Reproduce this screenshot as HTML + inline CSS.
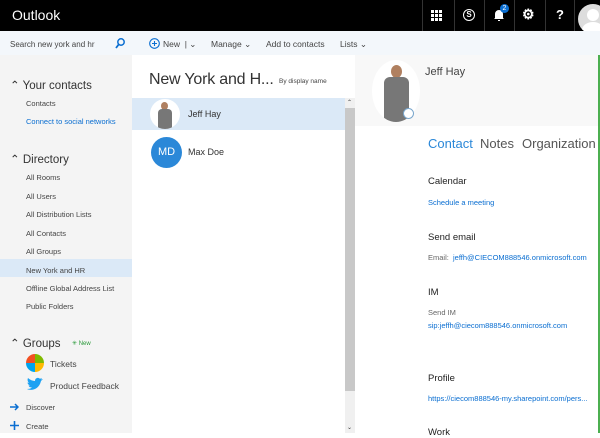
<!DOCTYPE html><html><head><style>
*{margin:0;padding:0;box-sizing:border-box}
body{width:600px;height:433px;overflow:hidden;font-family:"Liberation Sans",sans-serif;background:#fff;position:relative;color:#333}
.a{position:absolute;white-space:nowrap}
.top{left:0;top:0;width:600px;height:31px;background:#000}
.tb{left:0;top:31px;width:600px;height:24px;background:#f3f7fb}
.nav{left:0;top:55px;width:132px;height:378px;background:#f4f4f4}
.s{font-size:7.5px;color:#444}
.h{font-size:11.5px;color:#333}
.link{color:#0a6ed1}
.sep{top:0;width:1px;height:31px;background:#333}
</style></head><body>
<div class="a top"></div>
<div class="a" style="left:12px;top:7px;color:#fff;font-size:14px">Outlook</div>
<div class="a sep" style="left:422px"></div><div class="a sep" style="left:454px"></div><div class="a sep" style="left:484px"></div><div class="a sep" style="left:514px"></div><div class="a sep" style="left:545px"></div><div class="a sep" style="left:574px"></div>
<svg class="a" style="left:431px;top:10px" width="11" height="11"><g fill="#fff"><rect x="0" y="0" width="3" height="3"/><rect x="4" y="0" width="3" height="3"/><rect x="8" y="0" width="3" height="3"/><rect x="0" y="4" width="3" height="3"/><rect x="4" y="4" width="3" height="3"/><rect x="8" y="4" width="3" height="3"/><rect x="0" y="8" width="3" height="3"/><rect x="4" y="8" width="3" height="3"/><rect x="8" y="8" width="3" height="3"/></g></svg>
<div class="a" style="left:463px;top:9px;width:12px;height:12px;border:1.5px solid #fff;border-radius:50%;color:#fff;font-size:8px;font-weight:bold;text-align:center;line-height:10px">S</div>
<svg class="a" style="left:493px;top:8px" width="12" height="14"><path d="M2 10 V6 a4 4 0 0 1 8 0 V10 L11 11 H1 Z M5 12 h2 v1 h-2z" fill="#fff"/></svg>
<div class="a" style="left:500px;top:4px;width:9px;height:9px;border-radius:50%;background:#0a6ed1;color:#fff;font-size:7px;text-align:center;line-height:9px">2</div>
<div class="a" style="left:522px;top:6px;color:#fff;font-size:14px;font-weight:bold">⚙</div>
<div class="a" style="left:556px;top:7px;color:#fff;font-size:13px;font-weight:bold">?</div>
<div class="a" style="left:578px;top:4px;width:30px;height:30px;border-radius:50%;background:#ddd;overflow:hidden"><div style="position:absolute;left:9px;top:5px;width:12px;height:12px;border-radius:50%;background:#fff"></div><div style="position:absolute;left:4px;top:18px;width:22px;height:16px;border-radius:50%;background:#fff"></div></div>
<div class="a tb"></div>
<div class="a s" style="left:10px;top:40px;font-size:8px">Search new york and hr</div>
<svg class="a" style="left:115px;top:38px" width="10" height="11"><circle cx="6" cy="4" r="3.2" fill="none" stroke="#0a6ed1" stroke-width="1.5"/><path d="M4 6 L1 10" stroke="#0a6ed1" stroke-width="1.8"/></svg>
<svg class="a" style="left:149px;top:38px" width="11" height="11"><circle cx="5.5" cy="5.5" r="4.8" fill="none" stroke="#0a6ed1" stroke-width="1.1"/><path d="M5.5 3 V8 M3 5.5 H8" stroke="#0a6ed1" stroke-width="1.1"/></svg>
<div class="a s" style="left:163px;top:39px;font-size:8.5px">New &nbsp;|&nbsp;⌄</div>
<div class="a s" style="left:211px;top:39px;font-size:8.5px">Manage ⌄</div>
<div class="a s" style="left:266px;top:39px;font-size:8.5px">Add to contacts</div>
<div class="a s" style="left:340px;top:39px;font-size:8.5px">Lists ⌄</div>
<div class="a nav"></div>
<div class="a h" style="left:10px;top:78px">⌃ Your contacts</div>
<div class="a s" style="left:26px;top:99px">Contacts</div>
<div class="a s link" style="left:26px;top:117px">Connect to social networks</div>
<div class="a h" style="left:10px;top:152px">⌃ Directory</div>
<div class="a s" style="left:26px;top:173px">All Rooms</div>
<div class="a s" style="left:26px;top:192px">All Users</div>
<div class="a s" style="left:26px;top:210px">All Distribution Lists</div>
<div class="a s" style="left:26px;top:229px">All Contacts</div>
<div class="a" style="left:0;top:259px;width:132px;height:18px;background:#dbe9f7"></div>
<div class="a s" style="left:26px;top:247px">All Groups</div>
<div class="a s" style="left:26px;top:266px">New York and HR</div>
<div class="a s" style="left:26px;top:284px">Offline Global Address List</div>
<div class="a s" style="left:26px;top:302px">Public Folders</div>
<div class="a h" style="left:10px;top:336px">⌃ Groups</div>
<div class="a" style="left:72px;top:340px;font-size:6px;color:#2a9a3a">✳ New</div>
<div class="a" style="left:26px;top:354px;width:18px;height:18px;border-radius:50%;overflow:hidden"><div style="position:absolute;left:0;top:0;width:9px;height:9px;background:#f25022"></div><div style="position:absolute;left:9px;top:0;width:9px;height:9px;background:#7fba00"></div><div style="position:absolute;left:0;top:9px;width:9px;height:9px;background:#00a4ef"></div><div style="position:absolute;left:9px;top:9px;width:9px;height:9px;background:#ffb900"></div></div>
<div class="a s" style="left:50px;top:359px;font-size:8.5px">Tickets</div>
<svg class="a" style="left:26px;top:377px" width="18" height="16"><path d="M1 12 C5 14 13 13 15 4 L17 2 L15 2.5 L16 1 L14 1.8 C12 0 9 1 9 4 C6 4 3 2 2 1 C1 3 2 5 3 6 L1.5 5.5 C1.5 7 3 8 4 8.5 L2.5 8.5 C3 10 4.5 10.5 6 10.5 C4.5 11.7 3 12 1 12Z" fill="#1da1f2"/></svg>
<div class="a s" style="left:50px;top:381px;font-size:8.5px">Product Feedback</div>
<svg class="a" style="left:10px;top:403px" width="9" height="8"><path d="M0 4 H8 M5 1 L8 4 L5 7" fill="none" stroke="#0a6ed1" stroke-width="1.5"/></svg>
<div class="a s" style="left:26px;top:403px">Discover</div>
<svg class="a" style="left:10px;top:421px" width="9" height="9"><path d="M4.5 0 V9 M0 4.5 H9" stroke="#0a6ed1" stroke-width="1.6"/></svg>
<div class="a s" style="left:26px;top:422px">Create</div>
<div class="a" style="left:149px;top:71px;font-size:16px;color:#333;letter-spacing:-0.2px">New York and H...</div>
<div class="a" style="left:279px;top:78px;font-size:6.5px;color:#444">By display name</div>
<div class="a" style="left:132px;top:98px;width:213px;height:32px;background:#dbe9f7"></div>
<div class="a" style="left:150px;top:99px;width:30px;height:30px;border-radius:50%;background:#fff;overflow:hidden"><div style="position:absolute;left:11px;top:3px;width:7px;height:8px;border-radius:50%;background:#b08060"></div><div style="position:absolute;left:8px;top:10px;width:14px;height:20px;background:#777;border-radius:4px 4px 0 0"></div></div>
<div class="a" style="left:188px;top:109px;font-size:9px;color:#333">Jeff Hay</div>
<div class="a" style="left:151px;top:137px;width:31px;height:31px;border-radius:50%;background:#2b88d8;color:#fff;font-size:11px;text-align:center;line-height:31px">MD</div>
<div class="a" style="left:188px;top:147px;font-size:9px;color:#333">Max Doe</div>
<div class="a" style="left:345px;top:98px;width:10px;height:335px;background:#f0f0f0"></div>
<div class="a" style="left:345px;top:108px;width:10px;height:283px;background:#c8c8c8"></div>
<div class="a" style="left:347px;top:99px;font-size:6px;color:#333">⌃</div>
<div class="a" style="left:347px;top:424px;font-size:6px;color:#333">⌄</div>
<div class="a" style="left:355px;top:55px;width:245px;height:71px;background:#f8f8f8"></div>
<div class="a" style="left:598px;top:55px;width:2px;height:378px;background:#4caf50"></div>
<div class="a" style="left:372px;top:60px;width:48px;height:62px;border-radius:50%;background:#fff;overflow:hidden"><div style="position:absolute;left:19px;top:5px;width:11px;height:13px;border-radius:50%;background:#b08060"></div><div style="position:absolute;left:12px;top:17px;width:25px;height:45px;background:#777;border-radius:6px 6px 0 0"></div></div>
<div class="a" style="left:403px;top:108px;width:11px;height:11px;border-radius:50%;border:1px solid #7aa6cc;background:#fff"></div>
<div class="a" style="left:425px;top:66px;font-size:11px;color:#444">Jeff Hay</div>
<div class="a" style="left:428px;top:136px;font-size:13px;color:#2b88d8">Contact</div>
<div class="a" style="left:480px;top:136px;font-size:13px;color:#555">Notes</div>
<div class="a" style="left:522px;top:136px;font-size:13px;color:#555">Organization</div>
<div class="a" style="left:428px;top:176px;font-size:9.5px;color:#222">Calendar</div>
<div class="a s link" style="left:428px;top:198px">Schedule a meeting</div>
<div class="a" style="left:428px;top:232px;font-size:9.5px;color:#222">Send email</div>
<div class="a s" style="left:428px;top:253px;color:#666">Email: <span class="link">&nbsp;jeffh@CIECOM888546.onmicrosoft.com</span></div>
<div class="a" style="left:428px;top:287px;font-size:9.5px;color:#222">IM</div>
<div class="a s" style="left:428px;top:308px;color:#666">Send IM</div>
<div class="a s link" style="left:428px;top:321px">sip:jeffh@ciecom888546.onmicrosoft.com</div>
<div class="a" style="left:428px;top:373px;font-size:9.5px;color:#222">Profile</div>
<div class="a s link" style="left:428px;top:394px">https://ciecom888546-my.sharepoint.com/pers...</div>
<div class="a" style="left:428px;top:427px;font-size:9.5px;color:#222">Work</div>
</body></html>
